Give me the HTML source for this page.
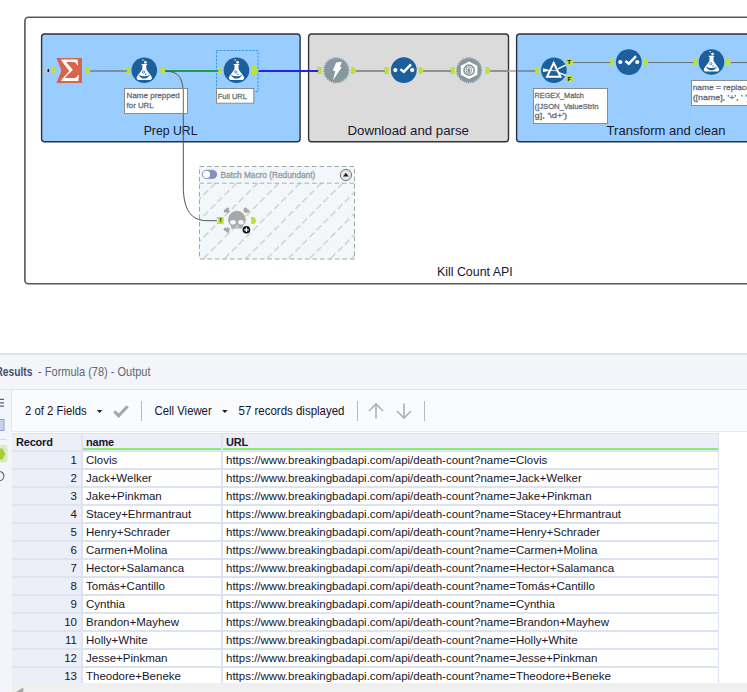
<!DOCTYPE html>
<html><head><meta charset="utf-8">
<style>
html,body{margin:0;padding:0;background:#fff;}
body{width:747px;height:692px;overflow:hidden;position:relative;font-family:"Liberation Sans",sans-serif;color:#1a1a1a;}
#canvas{position:absolute;left:0;top:0;width:747px;height:345px;}
#res{position:absolute;left:0;top:352px;width:747px;height:340px;background:#fff;}
#hdr{position:absolute;left:0;top:1px;width:747px;height:38px;background:#f3f5fa;border-top:2px solid #dde2ee;border-bottom:2px solid #dfe4ef;box-sizing:border-box;}
#strip{position:absolute;left:0;top:38px;width:12px;height:303px;background:#f3f5fa;}
#title{position:absolute;left:-3px;top:14px;font-size:11.6px;color:#59606b;white-space:nowrap;transform-origin:0 0;}
#title b{color:#3a3f4a;}
#tb{position:absolute;left:11px;top:38px;width:740px;height:42px;background:#fafbfe;border-left:1px solid #e3e7f0;border-bottom:1px solid #e6e9f2;border-radius:0 0 0 3px;box-sizing:border-box;}
.tbt{position:absolute;font-size:12.2px;white-space:nowrap;color:#14142a;transform-origin:0 0;}
.sep{position:absolute;top:11px;width:1px;height:20px;background:#b9b9b9;}
#grid{position:absolute;left:12px;top:81px;width:707px;height:251px;background:#dde3f0;overflow:hidden;}
.row{position:absolute;left:0;height:16px;width:707px;}
.c{position:absolute;top:0;height:16px;line-height:17px;font-size:11.5px;white-space:nowrap;overflow:hidden;color:#16162c;}
.c0{left:0;width:69px;background:#eceff7;text-align:right;}
.c0 span{padding-right:4px;}
.c1{left:71px;width:138px;background:#fff;}
.c2{left:211px;width:495px;background:#fff;}
.c1 span,.c2 span{padding-left:3px;}
.hd .c{background:#eceff7;font-weight:bold;font-size:11px;letter-spacing:-0.2px;line-height:17px;}
.hd .c0{text-align:left;}
.hd .c0 span{padding-left:4px;padding-right:0;}
.gl{position:absolute;top:15px;height:2px;background:#8cea76;}
#sb{position:absolute;left:12px;top:331px;width:735px;height:9px;background:#f0f0f0;}
</style></head><body>
<svg id="canvas" viewBox="0 0 747 345" font-family="Liberation Sans, sans-serif">
<defs>
<!-- input anchor 5.4x7 at origin (left/top) -->
<path id="ain" d="M0,0H5.3V6.9H0L2.2,3.45Z" fill="#bbe040"/>
<!-- output anchor -->
<path id="aout" d="M0,0H2.8Q4.9,1.2 4.9,3.45Q4.9,5.7 2.8,6.9H0Z" fill="#bbe040"/>
<!-- formula icon centered at 0,0 r=12.8 -->
<g id="formula">
<circle r="12.8" fill="#1b5f9c"/>
<path d="M-2.8,-6.3H2.8V-5.3H2V-1.6C2.3,0.2 6.6,4.6 7.5,6.7C8.1,8.5 7.1,9.6 5.6,9.6H-5.6C-7.1,9.6 -8.1,8.5 -7.5,6.7C-6.6,4.6 -2.3,0.2 -2,-1.6V-5.3H-2.8Z" fill="#fff"/>
<path d="M-6,4.4Q0,12.2 5.8,4.4Q0,7.4 -6,4.4Z" fill="#1b5f9c"/>
<circle cx="-0.7" cy="1.65" r="1.15" fill="none" stroke="#1b5f9c" stroke-width="0.7"/>
<circle cx="1.5" cy="3.9" r="0.7" fill="#1b5f9c"/>
<circle cx="1.05" cy="-8" r="1.35" fill="#fff"/>
<circle cx="-1.4" cy="-10.25" r="0.7" fill="#fff"/>
</g>
<!-- select icon -->
<g id="select">
<circle r="12.9" fill="#1b5f9c"/>
<circle cx="-8.5" cy="-0.1" r="2.1" fill="#fff"/>
<circle cx="8.4" cy="-0.1" r="2.1" fill="#fff"/>
<path d="M-3.4,-1.1L0,1.7L7.2,-5.9" fill="none" stroke="#fff" stroke-width="2.5"/>
</g>
<!-- gear circle -->
<g id="gear">
<circle r="12" fill="#86989f"/>
<circle r="12.2" fill="none" stroke="#86989f" stroke-width="1.8" stroke-dasharray="1.1 1.03"/>
</g>
<pattern id="diag" patternUnits="userSpaceOnUse" width="21.2" height="21.2" x="194.3" y="183">
<path d="M21.2,0L0,21.2" stroke="#b3c4bf" stroke-width="1" stroke-dasharray="6.8 3.4" fill="none"/>
</pattern>
</defs>

<!-- outer container -->
<rect x="24.9" y="17.25" width="760" height="266.5" rx="3.5" fill="#fff" stroke="#585858" stroke-width="1.6"/>
<text x="436.9" y="276.4" font-size="12.4" fill="#17172e" textLength="75.9" lengthAdjust="spacingAndGlyphs">Kill Count API</text>

<!-- group boxes -->
<rect x="41.6" y="34.05" width="258.5" height="107.75" rx="3" fill="#99ccff" stroke="#2c3238" stroke-width="1.4"/>
<rect x="308.6" y="34.05" width="199.9" height="107.75" rx="3" fill="#dbdbdb" stroke="#333" stroke-width="1.4"/>
<rect x="516.6" y="34.05" width="260" height="107.75" rx="3" fill="#99ccff" stroke="#2c3238" stroke-width="1.4"/>
<text x="143.7" y="134.5" font-size="12.4" fill="#17172e" textLength="53.8" lengthAdjust="spacingAndGlyphs">Prep URL</text>
<text x="347.5" y="134.5" font-size="12.4" fill="#17172e" textLength="121.4" lengthAdjust="spacingAndGlyphs">Download and parse</text>
<text x="606.6" y="134.5" font-size="12.4" fill="#17172e" textLength="119" lengthAdjust="spacingAndGlyphs">Transform and clean</text>

<!-- macro container -->
<rect x="199.5" y="166.5" width="155" height="92.5" fill="#f4f7f9"/>
<rect x="199.5" y="183" width="155" height="76" fill="url(#diag)"/>
<rect x="199.5" y="166.5" width="155" height="92.5" fill="none" stroke="#98ada8" stroke-width="1" stroke-dasharray="4.6 2.9"/>
<path d="M199.5,183.2H354.5" stroke="#98ada8" stroke-width="0.9" stroke-dasharray="4.6 2.9"/>
<rect x="202.2" y="170.2" width="14.6" height="8.4" rx="4.2" fill="#7f92c2" stroke="#6f83b5" stroke-width="0.6"/>
<circle cx="206.5" cy="174.4" r="3.6" fill="#fff"/>
<text x="220.4" y="177.9" font-size="8.8" fill="#8d99aa" stroke="#8d99aa" stroke-width="0.3" textLength="94.9" lengthAdjust="spacingAndGlyphs">Batch Macro (Redundant)</text>
<circle cx="345.9" cy="175" r="5.6" fill="#e6e6ea" stroke="#555" stroke-width="0.8"/>
<path d="M343,176.6L345.9,172.8L348.8,176.6Z" fill="#222"/>

<!-- wires -->
<path d="M90,71H127" stroke="#7a8ea6" stroke-width="1.9" fill="none"/>
<path d="M165,71H218.6" stroke="#1f9a4e" stroke-width="2" fill="none"/>
<path d="M165,71.2C177,71.2 183.3,76 183.3,95V186C183.3,211 192,220.7 207,220.7H217" stroke="#555" stroke-width="1" fill="none"/>
<path d="M258,71H318.6" stroke="#2222ee" stroke-width="2" fill="none"/>
<path d="M356,71H385" stroke="#8e8e8e" stroke-width="1.9" fill="none"/>
<path d="M423,71H451.5" stroke="#8e8e8e" stroke-width="1.9" fill="none"/>
<path d="M490,71H509" stroke="#8e8e8e" stroke-width="1.9" fill="none"/><path d="M509,71H516" stroke="#b4b4b4" stroke-width="1.9" fill="none"/><path d="M517,71H535.5" stroke="#7a8ea6" stroke-width="1.9" fill="none"/>
<path d="M573,62.5H610.5" stroke="#68727e" stroke-width="1.1" fill="none"/>
<path d="M648,62.5H693.5" stroke="#68727e" stroke-width="1.1" fill="none"/>
<path d="M731,62.5H747" stroke="#68727e" stroke-width="1.1" fill="none"/>

<!-- Summarize -->
<path d="M44.9,67Q42.9,70.5 44.9,74" stroke="#c4c4c4" stroke-width="1.5" fill="none"/>
<ellipse cx="48.3" cy="70.5" rx="0.9" ry="1.8" fill="#1a1a1a"/>
<path d="M46.7,67.6Q45.7,70.5 46.7,73.4" stroke="#cfcfcf" stroke-width="0.9" fill="none"/>
<use href="#ain" x="49.8" y="67"/>
<path d="M56.5,58H82V83H56.5L61.4,70.5Z" fill="#d8644b"/>
<path d="M61.3,59.6H77.5L78.1,65.3H77.1Q76.5,62 73.4,61.9H66L72.9,69.7L64.6,78.1H74.6Q77.4,77.9 78,75.1H78.9L78.3,80.9H61.3V79.9L69.3,71L61.3,60.6Z" fill="#fff"/>
<use href="#aout" x="85.3" y="67"/>

<!-- Formula 1 -->
<use href="#ain" x="125" y="67"/>
<use href="#formula" x="144.3" y="70.3"/>
<use href="#aout" x="160.4" y="67"/>
<rect x="124.5" y="88.5" width="63" height="25" fill="#fff" stroke="#8b8b8b" stroke-width="1"/>
<path d="M183.3,89V113" stroke="#666" stroke-width="1"/>
<text font-size="7.9" fill="#626e7c" stroke="#626e7c" stroke-width="0.28"><tspan x="126.6" y="97.8" textLength="53" lengthAdjust="spacingAndGlyphs">Name prepped</tspan><tspan x="126.6" y="108.2" textLength="27" lengthAdjust="spacingAndGlyphs">for URL</tspan></text>

<!-- Formula 2 (selected) -->
<rect x="216.5" y="50.5" width="41.6" height="41" fill="none" stroke="#2390e2" stroke-width="0.9" stroke-dasharray="2.2 1.4"/>
<use href="#ain" x="216.5" y="67"/>
<use href="#formula" x="236.5" y="70.3"/>
<path d="M251.2,65H255L258.7,70.5L255,76H251.2Z" fill="#bbe040"/>
<rect x="216.5" y="88.5" width="37.3" height="14.7" fill="#fff" stroke="#8b8b8b" stroke-width="1"/>
<text x="217.8" y="98.6" font-size="7.9" fill="#626e7c" stroke="#626e7c" stroke-width="0.28" textLength="29" lengthAdjust="spacingAndGlyphs">Full URL</text>

<!-- Download -->
<use href="#ain" x="316.4" y="67"/>
<use href="#gear" x="336.3" y="70.3"/>
<path d="M336.1,62.5L342,61.7L339.9,66.4L341.6,67.3L332.9,80.4L335.3,71.1L332.7,70.7Z" fill="#fff"/>
<use href="#aout" x="351.1" y="67"/>

<!-- Select -->
<use href="#ain" x="383.4" y="67"/>
<use href="#select" x="403.8" y="70.2"/>
<use href="#aout" x="418.4" y="67"/>

<!-- JSON parse -->
<use href="#ain" x="449.6" y="67"/>
<use href="#gear" x="469.1" y="70.3"/>
<path d="M469.1,61.5L477.4,65.8V74.8L469.1,79.1L460.8,74.8V65.8Z" fill="#fff"/>
<circle cx="469.1" cy="70.2" r="5.1" fill="none" stroke="#86989f" stroke-width="1.6"/>
<ellipse cx="468.8" cy="70.3" rx="2.7" ry="3.5" fill="none" stroke="#86989f" stroke-width="1"/>
<ellipse cx="468.8" cy="70.6" rx="1.4" ry="2.3" fill="#86989f"/>
<use href="#aout" x="485.4" y="67"/>

<!-- Filter -->
<use href="#ain" x="533.7" y="67"/>
<circle cx="553.9" cy="70.3" r="12.8" fill="#1b5f9c"/>
<path d="M553.7,63L547,76.7H560.5Z" fill="none" stroke="#fff" stroke-width="2"/>
<path d="M543,68.3V72L551.5,70.4Z" fill="#fff"/>
<path d="M551,70.4L557.4,70.9" stroke="#fff" stroke-width="0.8"/>
<path d="M558,68.9L565.6,65.1" stroke="#fff" stroke-width="1.4"/>
<path d="M558.6,72.6L566,75.5" stroke="#fff" stroke-width="1.4"/>
<path d="M566.4,58.6H570.4Q573.2,58.8 573.2,62Q573.2,65.2 570.4,65.4H566.4Z" fill="#bbe040"/>
<path d="M566.4,75.1H570.4Q573.2,75.3 573.2,78.5Q573.2,81.7 570.4,81.9H566.4Z" fill="#bbe040"/>
<text x="567.3" y="64.3" font-size="6.2" font-weight="bold" fill="#111">T</text>
<text x="567.5" y="80.8" font-size="6.2" font-weight="bold" fill="#111">F</text>
<rect x="533.5" y="88.5" width="74" height="35" fill="#fff" stroke="#8b8b8b" stroke-width="1"/>
<text font-size="7.9" fill="#626e7c" stroke="#626e7c" stroke-width="0.28"><tspan x="534.6" y="97.8" textLength="49.3" lengthAdjust="spacingAndGlyphs">REGEX_Match</tspan><tspan x="534.6" y="108.8" textLength="63.8" lengthAdjust="spacingAndGlyphs">([JSON_ValueStrin</tspan><tspan x="534.6" y="118.4" textLength="32.6" lengthAdjust="spacingAndGlyphs">g], '\d+')</tspan></text>

<!-- Select 2 -->
<use href="#ain" x="608.7" y="58.6"/>
<use href="#select" x="628.8" y="62.1"/>
<use href="#aout" x="643.2" y="58.6"/>

<!-- Formula 3 -->
<use href="#ain" x="691.5" y="58.6"/>
<use href="#formula" x="711.5" y="62"/>
<use href="#aout" x="726" y="58.6"/>
<rect x="691.5" y="80.5" width="70" height="25" fill="#fff" stroke="#8b8b8b" stroke-width="1"/>
<text font-size="7.9" fill="#626e7c" stroke="#626e7c" stroke-width="0.28"><tspan x="692.7" y="89.7" textLength="58" lengthAdjust="spacingAndGlyphs">name = replace</tspan><tspan x="692.7" y="100.1" textLength="57" lengthAdjust="spacingAndGlyphs">([name], '+', ' ')</tspan></text>

<!-- Skull macro -->
<path d="M216.4,217H223.6V224H216.4L218.4,220.5Z" fill="#bbe040"/>
<rect x="220.2" y="218" width="1.1" height="2.4" fill="#2c3a44"/>
<rect x="219.8" y="220.6" width="1.8" height="1.2" fill="#5a7a3a"/>
<g fill="#a8a8a8">
<circle cx="225.4" cy="211" r="1.75"/><circle cx="227.4" cy="209.2" r="1.75"/><path d="M225.2,210.6L227.6,208.6L230,211.2L227.6,213.2Z"/>
<circle cx="245.5" cy="209.2" r="1.75"/><circle cx="247.6" cy="211" r="1.75"/><path d="M245.2,208.6L247.8,210.8L245.6,213.2L243.2,211.2Z"/>
<circle cx="225.4" cy="229.3" r="1.75"/><circle cx="227.6" cy="230.9" r="1.75"/><path d="M225.2,229.6L227.8,231.6L230.2,229.2L228,227Z"/>
<path d="M228,219.6A8.9,8.8 0 0 1 245.8,219.6Q245.8,223 243.2,225.2L242.4,228.4H231.4L230.6,225.2Q228,223 228,219.6Z"/>
</g>
<ellipse cx="233" cy="222.3" rx="2.8" ry="2.3" fill="#f4f7f9"/>
<ellipse cx="241" cy="222.3" rx="2.8" ry="2.3" fill="#f4f7f9"/>
<path d="M236.2,226.8L237.1,224.6L238,226.8Z" fill="#f4f7f9"/>
<path d="M235,228.4V226.9M237,228.4V227.4M239,228.4V226.9" stroke="#f4f7f9" stroke-width="0.5"/>
<use href="#aout" x="251.1" y="217"/>
<circle cx="246.4" cy="229.8" r="3.8" fill="#111"/>
<path d="M244.1,229.8H248.7M246.4,227.5V232.1" stroke="#fff" stroke-width="1.3"/>
</svg>

<div id="res">
<div id="hdr"></div>
<div id="strip"></div>
<div id="tb"></div>
<svg style="position:absolute;left:0;top:0" width="747" height="82" viewBox="0 352 747 82" font-family="Liberation Sans, sans-serif">
<text x="-4.6" y="376" font-size="12.2" font-weight="bold" fill="#44506a" textLength="37.1" lengthAdjust="spacingAndGlyphs">Results</text>
<text x="38.1" y="376" font-size="12.2" fill="#5d6674" textLength="112.4" lengthAdjust="spacingAndGlyphs">- Formula (78) - Output</text>
<text x="25" y="415.2" font-size="12.6" fill="#14142a" textLength="61.7" lengthAdjust="spacingAndGlyphs">2 of 2 Fields</text>
<text x="154.6" y="415.2" font-size="12.6" fill="#14142a" textLength="57.1" lengthAdjust="spacingAndGlyphs">Cell Viewer</text>
<text x="238.5" y="415.2" font-size="12.6" fill="#14142a" textLength="106" lengthAdjust="spacingAndGlyphs">57 records displayed</text>
<path d="M96.8,410h5.6l-2.8,2.9z" fill="#222"/>
<path d="M222.1,410h5.6l-2.8,2.9z" fill="#222"/>
<path d="M114.3,411.2L118.6,415.8L127.6,406.2" stroke="#a6a6a6" stroke-width="3.1" fill="none"/>
<path d="M141.5,401v20M357.5,401v20M424.5,401v20" stroke="#b9b9b9" stroke-width="1"/>
<path d="M376,418.4V404.5M369,411L376,404L383,411" stroke="#b3b3b3" stroke-width="1.7" fill="none"/>
<path d="M404,403.6V417.5M397,411L404,418L411,411" stroke="#b3b3b3" stroke-width="1.7" fill="none"/>
</svg>
<svg style="position:absolute;left:0;top:40px" width="12" height="300" viewBox="0 0 12 300">
<path d="M0,7.4H4M0,10.8H4M0,14.2H4" stroke="#5a6278" stroke-width="1.2"/>
<rect x="-1" y="27.5" width="5" height="11" fill="#c6d0e8" stroke="#93a1c6" stroke-width="1"/>
<path d="M0,47.6H6.5" stroke="#d5d8df" stroke-width="1"/>
<rect x="-3" y="53" width="10.5" height="17.5" rx="2" fill="#d9ecc2"/>
<path d="M-3,56.5H2.6L5.2,62L2.6,67.5H-3Z" fill="#a7cd3b"/>
<circle cx="-0.7" cy="84" r="4.6" fill="none" stroke="#5a6068" stroke-width="1.1"/>
<path d="M-0.7,84V81" stroke="#5a6068" stroke-width="1"/>
</svg>
<div id="grid">
<div class="row hd" style="top:1px"><div class="c c0"><span>Record</span></div><div class="c c1"><span>name</span></div><div class="c c2"><span>URL</span></div></div>
<div class="gl" style="left:71px;width:138px"></div><div class="gl" style="left:211px;width:495px"></div>
<div class="row" style="top:19px"><div class="c c0"><span>1</span></div><div class="c c1"><span>Clovis</span></div><div class="c c2"><span>https://www.breakingbadapi.com/api/death-count?name=Clovis</span></div></div>
<div class="row" style="top:37px"><div class="c c0"><span>2</span></div><div class="c c1"><span>Jack+Welker</span></div><div class="c c2"><span>https://www.breakingbadapi.com/api/death-count?name=Jack+Welker</span></div></div>
<div class="row" style="top:55px"><div class="c c0"><span>3</span></div><div class="c c1"><span>Jake+Pinkman</span></div><div class="c c2"><span>https://www.breakingbadapi.com/api/death-count?name=Jake+Pinkman</span></div></div>
<div class="row" style="top:73px"><div class="c c0"><span>4</span></div><div class="c c1"><span>Stacey+Ehrmantraut</span></div><div class="c c2"><span>https://www.breakingbadapi.com/api/death-count?name=Stacey+Ehrmantraut</span></div></div>
<div class="row" style="top:91px"><div class="c c0"><span>5</span></div><div class="c c1"><span>Henry+Schrader</span></div><div class="c c2"><span>https://www.breakingbadapi.com/api/death-count?name=Henry+Schrader</span></div></div>
<div class="row" style="top:109px"><div class="c c0"><span>6</span></div><div class="c c1"><span>Carmen+Molina</span></div><div class="c c2"><span>https://www.breakingbadapi.com/api/death-count?name=Carmen+Molina</span></div></div>
<div class="row" style="top:127px"><div class="c c0"><span>7</span></div><div class="c c1"><span>Hector+Salamanca</span></div><div class="c c2"><span>https://www.breakingbadapi.com/api/death-count?name=Hector+Salamanca</span></div></div>
<div class="row" style="top:145px"><div class="c c0"><span>8</span></div><div class="c c1"><span>Tomás+Cantillo</span></div><div class="c c2"><span>https://www.breakingbadapi.com/api/death-count?name=Tomás+Cantillo</span></div></div>
<div class="row" style="top:163px"><div class="c c0"><span>9</span></div><div class="c c1"><span>Cynthia</span></div><div class="c c2"><span>https://www.breakingbadapi.com/api/death-count?name=Cynthia</span></div></div>
<div class="row" style="top:181px"><div class="c c0"><span>10</span></div><div class="c c1"><span>Brandon+Mayhew</span></div><div class="c c2"><span>https://www.breakingbadapi.com/api/death-count?name=Brandon+Mayhew</span></div></div>
<div class="row" style="top:199px"><div class="c c0"><span>11</span></div><div class="c c1"><span>Holly+White</span></div><div class="c c2"><span>https://www.breakingbadapi.com/api/death-count?name=Holly+White</span></div></div>
<div class="row" style="top:217px"><div class="c c0"><span>12</span></div><div class="c c1"><span>Jesse+Pinkman</span></div><div class="c c2"><span>https://www.breakingbadapi.com/api/death-count?name=Jesse+Pinkman</span></div></div>
<div class="row" style="top:235px"><div class="c c0"><span>13</span></div><div class="c c1"><span>Theodore+Beneke</span></div><div class="c c2"><span>https://www.breakingbadapi.com/api/death-count?name=Theodore+Beneke</span></div></div>
</div>
<div id="sb"><svg width="20" height="9" viewBox="0 0 20 9" style="position:absolute;left:0;top:0"><path d="M4,9L11.3,4.6V9Z" fill="#a6a6a6"/></svg></div>
</div>

</body></html>
